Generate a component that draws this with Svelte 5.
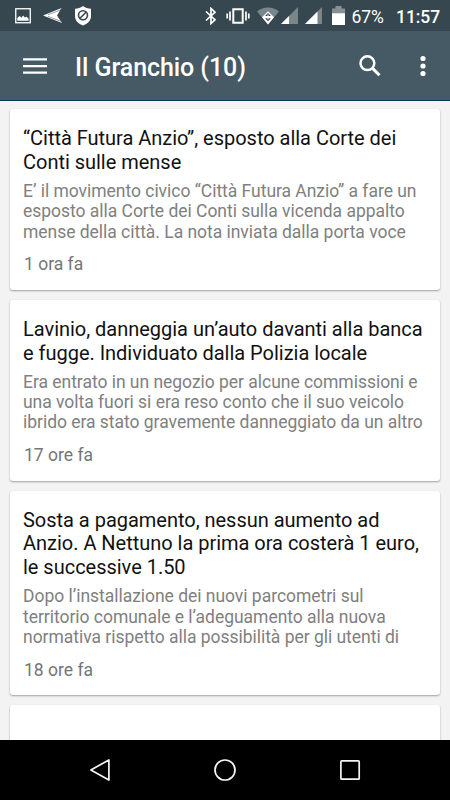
<script>
	const articles = [
		{
			title: ['“Città Futura Anzio”, esposto alla Corte dei', 'Conti sulle mense'],
			excerpt: ['E’ il movimento civico “Città Futura Anzio” a fare un', 'esposto alla Corte dei Conti sulla vicenda appalto', 'mense della città. La nota inviata dalla porta voce'],
			age: '1 ora fa'
		},
		{
			title: ['Lavinio, danneggia un’auto davanti alla banca', 'e fugge. Individuato dalla Polizia locale'],
			excerpt: ['Era entrato in un negozio per alcune commissioni e', 'una volta fuori si era reso conto che il suo veicolo', 'ibrido era stato gravemente danneggiato da un altro'],
			age: '17 ore fa'
		},
		{
			title: ['Sosta a pagamento, nessun aumento ad', 'Anzio. A Nettuno la prima ora costerà 1 euro,', 'le successive 1.50'],
			excerpt: ['Dopo l’installazione dei nuovi parcometri sul', 'territorio comunale e l’adeguamento alla nuova', 'normativa rispetto alla possibilità per gli utenti di'],
			age: '18 ore fa'
		}
	];
</script>

<div class="screen">
	<div class="status">
		<svg class="picture" width="16" height="16" viewBox="0 0 16 16">
			<rect x="0.75" y="0.75" width="14.5" height="14" fill="none" stroke="#fff" stroke-width="1.3" />
			<path d="M2.3 12.7V10l2.2-2 2 1.6 1.7-2 1.7 1.9 1.7-.8 2 2v2z" fill="#fff" />
		</svg>
		<svg class="plane" width="20" height="17" viewBox="0 0 20 17">
			<path d="M0 8.5 18.5 1 14 8.5 19 16z" fill="#fff" />
			<path d="M5 7.7 18 2.8M5 9.4l13 5" stroke="#37474f" stroke-width=".5" />
		</svg>
		<svg class="shield" width="18" height="20" viewBox="0 0 18 20">
			<path d="M9 0c2.5 2 5 2.7 8 2.8v7.5c0 4.5-3.5 7.5-8 9.3-4.5-1.8-8-4.8-8-9.3V2.8C4 2.7 6.5 2 9 0z" fill="#fff" />
			<g fill="none" stroke="#37474f" stroke-width="1.6"><circle cx="9" cy="9.3" r="4.5" /><path d="m6 12.3 6-6" /></g>
		</svg>
		<div class="spacer"></div>
		<svg class="bluetooth" width="12" height="18" viewBox="0 0 12 18">
			<path d="m1 4.5 9 8.3-4 3.7v-15l4 3.7-9 8.3" fill="none" stroke="#fff" stroke-width="1.7" />
		</svg>
		<svg class="vibrate" width="24" height="18" viewBox="0 0 24 18">
			<path d="M7.3 2.2h9.4v13.6H7.3z" fill="none" stroke="#fff" stroke-width="2" />
			<path d="M4 4.5v9M1.2 6.5v5M20 4.5v9M22.8 6.5v5" stroke="#fff" stroke-width="1.7" />
		</svg>
		<svg class="wifi" width="22" height="18" viewBox="0 0 22 18">
			<path d="M0 4.5C6-.7 16-.7 22 4.5l-11 13z" fill="#7b868b" />
			<path d="m5 10.3 6-6 6 6-6 7.2z" fill="#fff" />
			<path d="m8 8.9 3-2.9 3 2.9zM8 11.3h6l-3 2.9z" fill="#37474f" />
			<path d="M11 7.5v5" stroke="#fff" />
		</svg>
		<svg class="signal" width="17" height="17" viewBox="0 0 17 17">
			<path d="M0 17 17 0v17z" fill="#7b868b" /><path d="m0 17 8-8v8z" fill="#fff" />
		</svg>
		<svg class="signal second" width="17" height="17" viewBox="0 0 17 17">
			<path d="M0 17 17 0v17z" fill="#7b868b" /><path d="M0 17 12.5 4.5V17z" fill="#fff" />
		</svg>
		<svg class="battery" width="13" height="19" viewBox="0 0 13 19">
			<path d="M0 2.500h3.500V0h6v2.500H13V8H0z" fill="#879195" /><path d="M0 7.300h13V19H0z" fill="#fff" />
		</svg>
		<span class="percent">67%</span>
		<span class="clock">11:57</span>
	</div>

	<header>
		<svg class="menu" width="24" height="18" viewBox="0 0 24 18">
			<path d="M0 2.3h24M0 9.1h24M0 15.6h24" stroke="#fff" stroke-width="2.3" />
		</svg>
		<h1>Il Granchio (10)</h1>
		<svg class="search" width="24" height="24" viewBox="0 0 24 24">
			<circle cx="9.4" cy="9.2" r="6.9" fill="none" stroke="#fff" stroke-width="2.5" />
			<path d="m14.3 14.1 7.2 7.2" stroke="#fff" stroke-width="3" />
		</svg>
		<svg class="more" width="6" height="22" viewBox="0 0 6 22">
			<g fill="#fff"><circle cx="3" cy="3.5" r="2.6" /><circle cx="3" cy="11" r="2.6" /><circle cx="3" cy="18.5" r="2.6" /></g>
		</svg>
	</header>

	<main>
		{#each articles as article}
			<article class="card">
				<h2>{article.title.join('\n')}</h2>
				<p>{article.excerpt.join('\n')}</p>
				<time>{article.age}</time>
			</article>
		{/each}
		<article class="card next"></article>
	</main>

	<nav>
		<svg width="24" height="24" viewBox="0 0 24 24"><path d="M2.9 12 20.9 1.9v20.2z" /></svg>
		<svg width="24" height="24" viewBox="0 0 24 24"><circle cx="12" cy="12" r="10" /></svg>
		<svg width="24" height="24" viewBox="0 0 24 24"><rect x="2.9" y="2.9" width="18.3" height="18.3" rx=".8" /></svg>
	</nav>
</div>

<style>
	:global(body) { margin: 0; overflow: hidden; }
	.screen { width: 450px; height: 800px; display: flex; flex-direction: column; background: #f3f3f3; font-family: Roboto, "Noto Sans", sans-serif; overflow: hidden; }
	svg { display: block; flex: none; }
	.status { flex: none; height: 31px; display: flex; align-items: center; background: #37474f; color: #fff; }
	.picture { margin-left: 14.5px; }
	.plane { margin-left: 12px; }
	.shield { margin-left: 11px; }
	.spacer { flex: 1; }
	.vibrate { margin-left: 9px; }
	.wifi { margin-left: 7px; }
	.signal { margin-left: 2px; }
	.second { margin-left: 7px; }
	.battery { margin-left: 9.5px; }
	.percent { width: 33px; margin-left: 7px; font-size: 17.5px; line-height: 31px; letter-spacing: -0.1px; white-space: nowrap; padding-top: 3px; }
	.clock { width: 44px; margin: 0 10px 0 11.5px; font-size: 17.5px; font-weight: 500; line-height: 31px; letter-spacing: -0.05px; padding-top: 3px; }
	header { flex: none; height: 70px; box-sizing: border-box; display: flex; align-items: center; background: #455a64; border-bottom: 1px solid #083c55; color: #fff; }
	.menu { margin-left: 23px; }
	h1 { flex: 1; margin: 5px 0 0 28px; font-size: 25px; line-height: 30px; font-weight: 500; letter-spacing: -0.07px; white-space: nowrap; }
	.search { margin-top: 1px; }
	.more { margin: 1px 24.5px 0 37.5px; }
	main { flex: 1; min-height: 0; overflow: hidden; display: flex; flex-direction: column; gap: 10px; padding: 8px 10px 0; }
	.card { flex: none; box-sizing: border-box; padding: 18px 13px 15.4px; background: #fff; border-radius: 3px; box-shadow: 0 1px 2px rgba(0, 0, 0, 0.35); }
	.next { height: 80px; }
	h2 { margin: 0; color: #111; font-size: 20px; line-height: 23.75px; font-weight: 400; letter-spacing: -0.02px; white-space: pre; }
	p { margin: 6.5px 0 0; color: #808080; font-size: 17.5px; line-height: 20.3px; letter-spacing: -0.03px; white-space: pre; }
	time { display: block; margin: 12.5px 0 0 1px; color: #757575; font-size: 17.5px; line-height: 20px; }
	nav { flex: none; height: 60px; display: flex; align-items: center; justify-content: center; gap: 101px; background: #000; }
	nav svg { fill: none; stroke: #f5f5f5; stroke-width: 1.7; stroke-linejoin: round; }
</style>
